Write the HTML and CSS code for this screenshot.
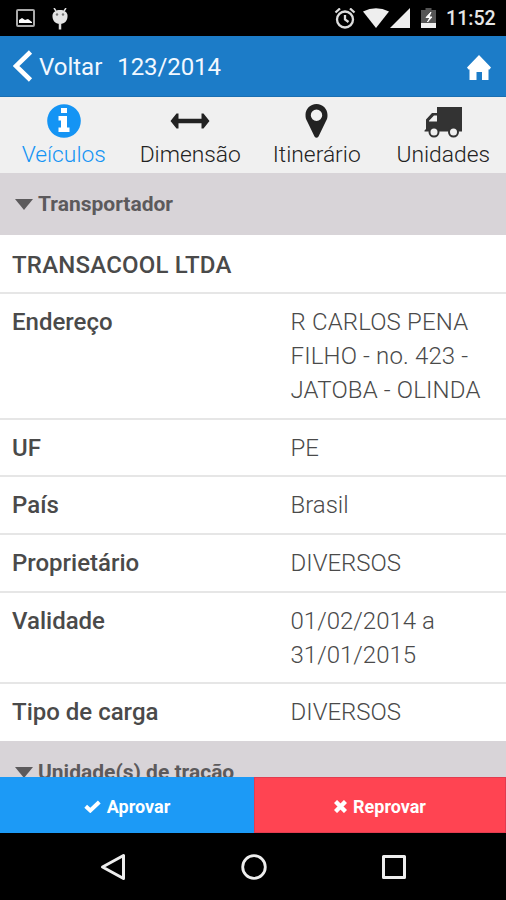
FILE: index.html
```
<!DOCTYPE html>
<html lang="pt-BR">
<head>
  <meta charset="UTF-8">
  <meta name="viewport" content="width=device-width, initial-scale=1.0">
  <title>Voltar 123/2014</title>
  <link rel="stylesheet" href="styles.css">
</head>
<body>
  <div class="app">

    <div class="statusbar">
      <svg class="sb-picture" width="19" height="18" viewBox="0 0 19 18">
        <rect x="1" y="1" width="17" height="16" rx="1" fill="none" stroke="#aaa" stroke-width="2"/>
        <path d="M3 14v-3l3-2 3 2 3-1 4 3v1z" fill="#fff"/>
      </svg>
      <svg class="sb-debug" width="18" height="24" viewBox="0 0 18 24">
        <path d="M3 0l2 3M15 0l-2 3" stroke="#ddd" stroke-width="1.5"/>
        <path d="M1.500 7C2 4 5 2 9 2S16 4 16.500 7C17 12 14 16 9 16S1 12 1.500 7z" fill="#e4e4e4"/>
        <circle cx="6" cy="6.500" r="1.200" fill="#777"/><circle cx="12" cy="6.500" r="1.200" fill="#777"/>
        <path d="M9 15v6.500" stroke="#ddd" stroke-width="2.500"/>
      </svg>
      <div class="sb-right">
        <svg class="sb-alarm" width="22" height="22" viewBox="0 0 22 22" fill="none" stroke="#ddd" stroke-width="2.300">
          <circle cx="11" cy="11.500" r="8"/>
          <path d="M1.500 4.500l4.500-4M20.500 4.500L16 .5M11 7v4.500l3.500 2.500"/>
        </svg>
        <svg class="sb-wifi" width="26" height="20" viewBox="0 0 26 20"><path d="M0 3.500Q13-3 26 3.500L13 20z" fill="#eee"/></svg>
        <svg class="sb-signal" width="20" height="20" viewBox="0 0 20 20"><path d="M20 0v20H0z" fill="#eee"/></svg>
        <svg class="sb-battery" width="15" height="21" viewBox="0 0 15 21">
          <path d="M4.500 0h6v2H15v13H0V2h4.500z" fill="#555"/>
          <path d="M0 15h15v5H0z" fill="#eee"/>
          <path d="M10 4L5 9.500h4L6.500 14 11 9H8z" fill="#fff" stroke="#fff"/>
        </svg>
        <span class="clock">11:52</span>
      </div>
    </div>

    <div class="header">
      <svg class="back" width="20" height="32" viewBox="0 0 20 32"><path d="M17.500 2L3 16l14.500 14" fill="none" stroke="#fff" stroke-width="4.600"/></svg>
      <span class="back-label">Voltar</span>
      <span class="title">123/2014</span>
      <svg class="home" width="24" height="25" viewBox="0 0 24 25"><path d="M12 0l12 12.500-1.500 2H21.500V25H15v-8H9.500v8H2.500V14.500H1.500L0 12.500z" fill="#fff"/></svg>
    </div>

    <div class="tabs">
      <div class="tab active">
        <svg width="34" height="34" viewBox="0 0 34 34">
          <circle cx="17" cy="17" r="16.800" fill="#1494f4"/>
          <path d="M14 4h6v5h-6zM11.500 12H20v11.500h2.500V28h-11v-4.500H14v-7h-2.500z" fill="#fff"/>
        </svg>
        <span>Veículos</span>
      </div>
      <div class="tab">
        <svg width="40" height="34" viewBox="0 0 40 34">
          <path d="M0.500 17l6-7.500h2v5.300h23V9.500h2l6 7.500-6 7.500h-2v-5.300h-23v5.300h-2z" fill="#222"/>
        </svg>
        <span>Dimensão</span>
      </div>
      <div class="tab">
        <svg width="23" height="34" viewBox="0 0 23 34">
          <path fill-rule="evenodd" d="M11.500 0C5 0 0.500 5 0.500 11c0 3 .5 4 1.500 6l7.500 15.500q2 2.500 4 0L21 17c1-2 1.500-3 1.500-6 0-6-4.500-11-11-11zm0 5.500a5.700 5.700 0 1 1 0 11.400 5.700 5.700 0 0 1 0-11.400z" fill="#222"/>
        </svg>
        <span>Itinerário</span>
      </div>
      <div class="tab">
        <svg width="38" height="34" viewBox="0 0 38 34">
          <path fill-rule="evenodd" d="M13 3h25v24.500H0.500V26.500L2 25v-9.500L8 9h5zM10 11.500L5 16.800V17.500h8v-6z" fill="#333"/>
          <circle cx="10" cy="28" r="4.500" fill="#f0f0f0" stroke="#333" stroke-width="2"/>
          <circle cx="29.500" cy="28" r="4.500" fill="#f0f0f0" stroke="#333" stroke-width="2"/>
        </svg>
        <span>Unidades</span>
      </div>
    </div>

    <div class="content">
      <div class="section"><i class="caret"></i><span>Transportador</span></div>
      <div class="row first"><b>TRANSACOOL LTDA</b></div>
      <div class="row address"><b>Endereço</b><span>R CARLOS PENA<br>FILHO - no. 423 -<br>JATOBA - OLINDA</span></div>
      <div class="row"><b>UF</b><span>PE</span></div>
      <div class="row"><b>País</b><span>Brasil</span></div>
      <div class="row"><b>Proprietário</b><span>DIVERSOS</span></div>
      <div class="row"><b>Validade</b><span>01/02/2014 a<br>31/01/2015</span></div>
      <div class="row last"><b>Tipo de carga</b><span>DIVERSOS</span></div>
      <div class="section"><i class="caret"></i><span>Unidade(s) de tração</span></div>
    </div>

    <div class="actions">
      <div class="btn approve">
        <svg width="17" height="13" viewBox="0 0 17 13"><path d="M1.700 6.200L6.300 10.500 15.300 2" fill="none" stroke="#fff" stroke-width="4"/></svg>
        <span>Aprovar</span>
      </div>
      <div class="btn reject">
        <svg width="13" height="13" viewBox="0 0 13 13"><path d="M1.500 1.500l10 10M11.500 1.500l-10 10" stroke="#fff" stroke-width="4.400"/></svg>
        <span>Reprovar</span>
      </div>
    </div>

    <div class="navbar">
      <svg width="26" height="28" viewBox="0 0 26 28"><path d="M23.500 2.500v23L2.500 14z" fill="none" stroke="#eee" stroke-width="3" stroke-linejoin="round"/></svg>
      <svg width="26" height="28" viewBox="0 0 26 28"><circle cx="13" cy="14" r="11.300" fill="none" stroke="#eee" stroke-width="2.800"/></svg>
      <svg width="26" height="28" viewBox="0 0 26 28"><rect x="2.500" y="3.500" width="21" height="21" fill="none" stroke="#eee" stroke-width="3" stroke-linejoin="round"/></svg>
    </div>

  </div>
</body>
</html>
```
FILE: styles.css
```
* {
  box-sizing: border-box;
}

body {
  margin: 0;
  background: #000;
  font-family: Roboto, "Liberation Sans", sans-serif;
}

svg {
  display: block;
  flex: none;
}

.app {
  display: flex;
  flex-direction: column;
  width: 506px;
  height: 900px;
  overflow: hidden;
}

/* android status bar */
.statusbar {
  display: flex;
  flex: none;
  height: 36px;
  padding: 8px 10px 0 16px;
  background: #000;
}

.sb-picture {
  margin-top: 1px;
}

.sb-debug {
  margin-left: 16px;
}

.sb-right {
  display: flex;
  margin-left: auto;
}

.sb-alarm {
  margin-right: -1px;
}

.sb-wifi {
  margin: 0 0 0 8px;
}

.sb-signal {
  margin: 0 0 0 1px;
}

.sb-battery {
  margin-left: 11px;
}

.clock {
  width: 50px;
  margin-left: 10px;
  color: #e6e6e6;
  font-size: 19.6px;
  font-weight: 500;
  line-height: 22px;
  white-space: nowrap;
}

/* header */
.header {
  display: flex;
  flex: none;
  align-items: center;
  height: 61px;
  padding: 1px 15px 0 13px;
  background: #1c7cc8;
  border-bottom: 1px solid #1a6fb2;
  color: #f2f8ff;
  font-size: 24px;
}

.back {
  margin-top: -2px;
}

.back-label {
  margin-left: 6px;
}

.title {
  margin-left: 15px;
  letter-spacing: -0.1px;
}

.home {
  margin-left: auto;
  margin-top: 2px;
}

/* tabs */
.tabs {
  display: grid;
  grid-template-columns: repeat(4, 1fr);
  flex: none;
  height: 76px;
  background: #f0f0f0;
  color: #222;
  font-size: 22.8px;
  font-weight: 300;
}

.tab {
  display: flex;
  flex-direction: column;
  align-items: center;
  padding: 7px 0 0 1px;
  line-height: 34px;
  white-space: nowrap;
}

.tab.active {
  color: #1494f4;
}

.content {
  flex: 1;
  min-height: 0;
  overflow: hidden;
  background: #fff;
}

.section {
  display: flex;
  align-items: center;
  height: 62px;
  padding-left: 15px;
  background: #d8d4d8;
  color: #5c5a5c;
  font-size: 21px;
  font-weight: 700;
}

.caret {
  margin-right: 5px;
  border: 9px solid transparent;
  border-top: 11px solid #5c5a5c;
  border-bottom: 0;
}

.row {
  display: grid;
  grid-template-columns: 278.5px 1fr;
  padding: 12px 0 10px 12px;
  border-bottom: 2px solid #e6e6e6;
  color: #4a4a4a;
  font-size: 24px;
  font-weight: 300;
  line-height: 33.75px;
  white-space: nowrap;
}

.row b {
  font-weight: 500;
}

.row.first {
  padding-top: 13.6px;
  letter-spacing: 0.2px;
}

.row.address span {
  letter-spacing: 0.15px;
}

.row.last {
  padding-bottom: 11px;
  border-bottom: 0;
}

/* bottom buttons */
.actions {
  display: grid;
  grid-template-columns: 254px 1fr;
  flex: none;
  height: 56px;
}

.btn {
  display: flex;
  align-items: center;
  justify-content: center;
  gap: 6px;
  padding-top: 3px;
  color: #fff;
  font-size: 18px;
  font-weight: 700;
}

.approve {
  background: #1c9af6;
}

.reject {
  background: #ff4452;
  border: 1px solid #e23c50;
}

.navbar {
  display: flex;
  flex: none;
  justify-content: center;
  gap: 114.5px;
  height: 67px;
  padding: 20px 0 0 1px;
  background: #000;
}
```
